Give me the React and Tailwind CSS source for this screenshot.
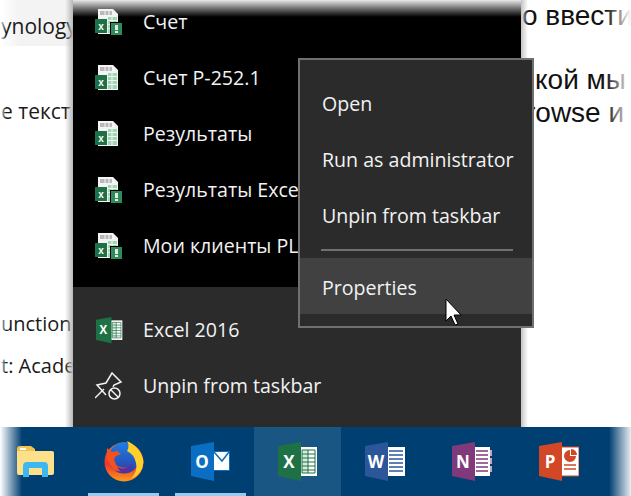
const menuFont = "font-['Open_Sans','Noto_Sans',sans-serif]";

const FileIcon = ({ badge }) => (
    <svg width="28" height="26" viewBox="0 0 28 26" className="shrink-0">
        <path d="M3 0H18L23 5V25H3Z" fill="#f4f4f4" />
        <path d="M5 2H17V6H5Z" fill="#b9b9b9" />
        <path d="M10 2V6M14 2V6" stroke="#f4f4f4" />
        <path d="M13 8H22V24H13Z" fill="#9fd6b4" />
        <path d="M13 11.5H22M13 15.5H22M13 19.5H22M17 8V24" stroke="#f4f4f4" />
        <rect x="0" y="10" width="12" height="14" fill="#1e7145" />
        <text x="6" y="21" textAnchor="middle" fill="#fff" fontSize="10" fontWeight="700" fontFamily="Liberation Sans, sans-serif">x</text>
        {badge && (
            <>
                <rect x="15" y="13" width="13" height="13" fill="#000" />
                <rect x="16" y="14" width="11" height="12" fill="#2f8a5c" />
                <rect x="20" y="16" width="3" height="5" fill="#e8e8e8" />
                <rect x="20" y="22" width="3" height="2" fill="#e8e8e8" />
            </>
        )}
    </svg>
);

const OfficeIcon = ({ size = 40, color, letter, children }) => (
    <svg width={size} height={size} viewBox="0 0 40 40" className="shrink-0">
        {children}
        <path d="M0 4L23 0V39L0 34Z" fill={color} />
        <text x="11" y="25.500" textAnchor="middle" fill="#fff" fontSize="17" fontWeight="700" fontFamily="Open Sans, sans-serif">{letter}</text>
    </svg>
);

const ExcelIcon = ({ size }) => (
    <OfficeIcon size={size} color="#1e7145" letter="X">
        <rect x="22" y="5" width="17" height="29" fill="#fff" />
        <path d="M24 8H30V31H24Z" fill="#d7ecdf" />
        <path d="M24 12H37M24 16H37M24 20H37M24 24H37M24 28H37M30 8V31" stroke="#1e7145" />
        <path d="M24 8H37V31H24Z" fill="none" stroke="#1e7145" />
    </OfficeIcon>
);

const OutlookIcon = () => (
    <OfficeIcon color="#0a6fc2" letter="O">
        <rect x="22" y="9" width="17" height="20" fill="#fff" />
        <path d="M23 10L31 19L38 10" fill="none" stroke="#0a6fc2" strokeWidth="1.500" />
        <rect x="22.500" y="9.500" width="16" height="19" fill="none" stroke="#0a6fc2" />
    </OfficeIcon>
);

const WordIcon = () => (
    <OfficeIcon color="#2b579a" letter="W">
        <rect x="22" y="5" width="18" height="29" fill="#fff" />
        <path d="M24 9H38M24 13H38M24 17H38M24 21H38M24 25H38M24 29H38" stroke="#2b579a" strokeWidth="1.500" />
    </OfficeIcon>
);

const OneNoteIcon = () => (
    <OfficeIcon color="#80397b" letter="N">
        <rect x="22" y="5" width="16" height="29" fill="#fff" />
        <path d="M24 9H36M24 13H36M24 17H36M24 21H36M24 25H36M24 29H36" stroke="#80397b" strokeWidth="1.500" />
        <path d="M38 8H40V14H38ZM38 16H40V22H38ZM38 24H40V30H38Z" fill="#c9a6c6" />
    </OfficeIcon>
);

const PowerPointIcon = () => (
    <OfficeIcon color="#d24726" letter="P">
        <rect x="22" y="5" width="18" height="29" fill="#fff" stroke="#d24726" />
        <path d="M31 8V14H37A6 6 0 1 1 31 8Z" fill="#d24726" />
        <path d="M32 7A6 6 0 0 1 38 13H32Z" fill="#d24726" />
        <path d="M25 23H37M25 27H37" stroke="#d24726" strokeWidth="1.500" />
    </OfficeIcon>
);

const FolderIcon = () => (
    <svg width="38" height="32" viewBox="0 0 38 32" className="shrink-0">
        <path d="M0 3Q0 0 3 0H14L18 3V6H0Z" fill="#f5c14f" />
        <path d="M3 2H9V4H3Z" fill="#fff" />
        <path d="M0 5H35Q37 5 37 7V27Q37 29 35 29H2Q0 29 0 27Z" fill="#fde08a" />
        <path d="M6 31V20Q6 16 10 16H27Q31 16 31 20V31H25V22H12V31Z" fill="#3db7ef" />
    </svg>
);

const FirefoxIcon = () => (
    <svg width="40" height="42" viewBox="0 0 40 42" className="shrink-0">
        <defs>
            <linearGradient id="fx" x1="0.500" y1="0" x2="0.500" y2="1">
                <stop offset="0" stopColor="#f7761f" />
                <stop offset="0.550" stopColor="#f0342b" />
                <stop offset="1" stopColor="#fb9a1c" />
            </linearGradient>
            <linearGradient id="fxb" x1="0.500" y1="0" x2="0.500" y2="1">
                <stop offset="0" stopColor="#1f7de6" />
                <stop offset="1" stopColor="#2b3fa8" />
            </linearGradient>
        </defs>
        <circle cx="20" cy="21" r="19.500" fill="url(#fx)" />
        <circle cx="20" cy="17" r="15.500" fill="url(#fxb)" />
        {/* the fox's arm and tail over the globe */}
        <path d="M3 7L8 11L13 10L17 13L12 15L10 18L12 24Q17 28 25 26Q19 33 10 29Q1 20 3 7Z" fill="#f4511e" />
        <path d="M13 26Q20 30 29 23Q27 32 19 32Q15 30 13 26Z" fill="#5a2da0" />
        <path d="M23 0Q38 7 39.500 21Q39 33 27 38Q34 30 32 22Q30 13 23 10Q26 5 23 0Z" fill="#ffd02c" />
    </svg>
);

const UnpinIcon = () => (
    <svg width="28" height="28" viewBox="0 0 28 28" className="shrink-0" fill="none" stroke="#f2f2f2" strokeWidth="1.500">
        <path d="M0 26L9 17" />
        <path d="M11 23L2 13L11 11L17 1L26 10L19 13L18 15" />
        <circle cx="19.500" cy="21.500" r="5.500" />
        <path d="M15.500 17.500L23.500 25.500" />
    </svg>
);

const MenuRow = ({ icon, label }) => (
    <div className="h-14 flex items-center gap-5 pl-[22px] whitespace-nowrap">
        <div className="w-[28px] flex justify-center">{icon}</div>
        <span className="text-[19.6px] text-[#f2f2f2]">{label}</span>
    </div>
);

const TaskbarCell = ({ children, active, underline, className = "w-[87px]" }) => (
    <div className={`${className} h-full relative flex items-center justify-center ${active ? "bg-[#1a5683]" : ""}`}>
        {children}
        {underline && <div className="absolute bottom-0 left-2 right-2 h-[3px] bg-[#99cbee]" />}
    </div>
);

const App = () => {
    return (
        <div className={`w-[631px] h-[496px] relative overflow-hidden bg-white flex flex-col ${menuFont}`}>
            <div className="h-[427px] flex">
                {/* page behind the menu, left side */}
                <div className="w-[73px] h-full shrink-0 relative overflow-hidden whitespace-nowrap text-[20px] text-[#1a1a1a]">
                    <div className="h-[46px] flex items-center bg-[linear-gradient(to_right,white,#f3f3f3_20px)] text-[21px]">
                        <span className="mt-2 ml-[1px]">ynology</span>
                    </div>
                    <div className="h-[81px] flex items-end text-[21px]">
                        <span className="ml-[1px]">е тексты</span>
                    </div>
                    <div className="h-[212px] flex items-end">
                        <span className="ml-[1px]">unction</span>
                    </div>
                    <div className="h-[42px] flex items-end">
                        <span className="ml-[1px]">t: Acade</span>
                    </div>
                    <div className="absolute inset-0 bg-[linear-gradient(to_right,white,transparent_6px,transparent_65px,#b8b8b8)]" />
                </div>

                <div className="w-[448px] shrink-0 flex flex-col">
                    <div className="h-[287px] overflow-hidden bg-[linear-gradient(to_bottom,#e8e8e8,#777_8px,#000_17px)]">
                        <div className="-mt-[6px]">
                            <MenuRow icon={<FileIcon badge />} label="Счет" />
                            <MenuRow icon={<FileIcon />} label="Счет Р-252.1" />
                            <MenuRow icon={<FileIcon />} label="Результаты" />
                            <MenuRow icon={<FileIcon badge />} label="Результаты Excel" />
                            <MenuRow icon={<FileIcon badge />} label="Мои клиенты PL" />
                        </div>
                    </div>
                    <div className="h-[140px] bg-[#2b2b2b] pt-[15px]">
                        <MenuRow icon={<ExcelIcon size={27} />} label="Excel 2016" />
                        <MenuRow icon={<UnpinIcon />} label="Unpin from taskbar" />
                    </div>
                </div>

                {/* page behind the menu, right side */}
                <div className="flex-1 relative overflow-hidden whitespace-nowrap font-['Liberation_Sans',sans-serif] text-[28px] leading-[33px] text-[#111]">
                    <div className="-mt-[1px] ml-[1px]">о ввести</div>
                    <div className="mt-[31px] ml-[14px]">кой мы</div>
                    <div className="-ml-[9px] pl-[14px]">rowse и</div>
                    <div className="absolute inset-0 bg-[linear-gradient(to_right,#c4c4c4,transparent_7px,transparent_85px,white)]" />
                </div>
            </div>

            <div className="h-[69px] flex bg-[linear-gradient(to_right,white,#003f72_22px,#003f72_609px,#e8edf2)]">
                <TaskbarCell className="w-[72px] mr-[8px]"><FolderIcon /></TaskbarCell>
                <TaskbarCell underline><FirefoxIcon /></TaskbarCell>
                <TaskbarCell underline><OutlookIcon /></TaskbarCell>
                <TaskbarCell active><ExcelIcon /></TaskbarCell>
                <TaskbarCell><WordIcon /></TaskbarCell>
                <TaskbarCell><OneNoteIcon /></TaskbarCell>
                <TaskbarCell><PowerPointIcon /></TaskbarCell>
            </div>

            {/* context menu */}
            <div className="absolute left-[298px] top-[58px] w-[236px] h-[270px] border-2 border-[#707070] bg-[#2b2b2b] pt-4 text-[19.6px] text-[#f2f2f2] whitespace-nowrap">
                <div className="h-14 flex items-center pl-[22px]">Open</div>
                <div className="h-14 flex items-center pl-[22px]">Run as administrator</div>
                <div className="h-14 flex items-center pl-[22px]">Unpin from taskbar</div>
                <div className="h-[14px] pt-[5px] ml-[21px] mr-[19px]">
                    <div className="h-[2px] bg-[#707070]" />
                </div>
                <div className="h-14 flex items-center pl-[22px] pt-[3px] bg-[#414141]">Properties</div>
            </div>

            {/* mouse pointer */}
            <svg width="19" height="28" viewBox="0 0 19 28" className="absolute left-[445px] top-[298px]">
                <path d="M1 1V23L6 18L10 27L13 26L9 17H16Z" fill="#fff" stroke="#000" />
            </svg>
        </div>
    );
};

export default App;
